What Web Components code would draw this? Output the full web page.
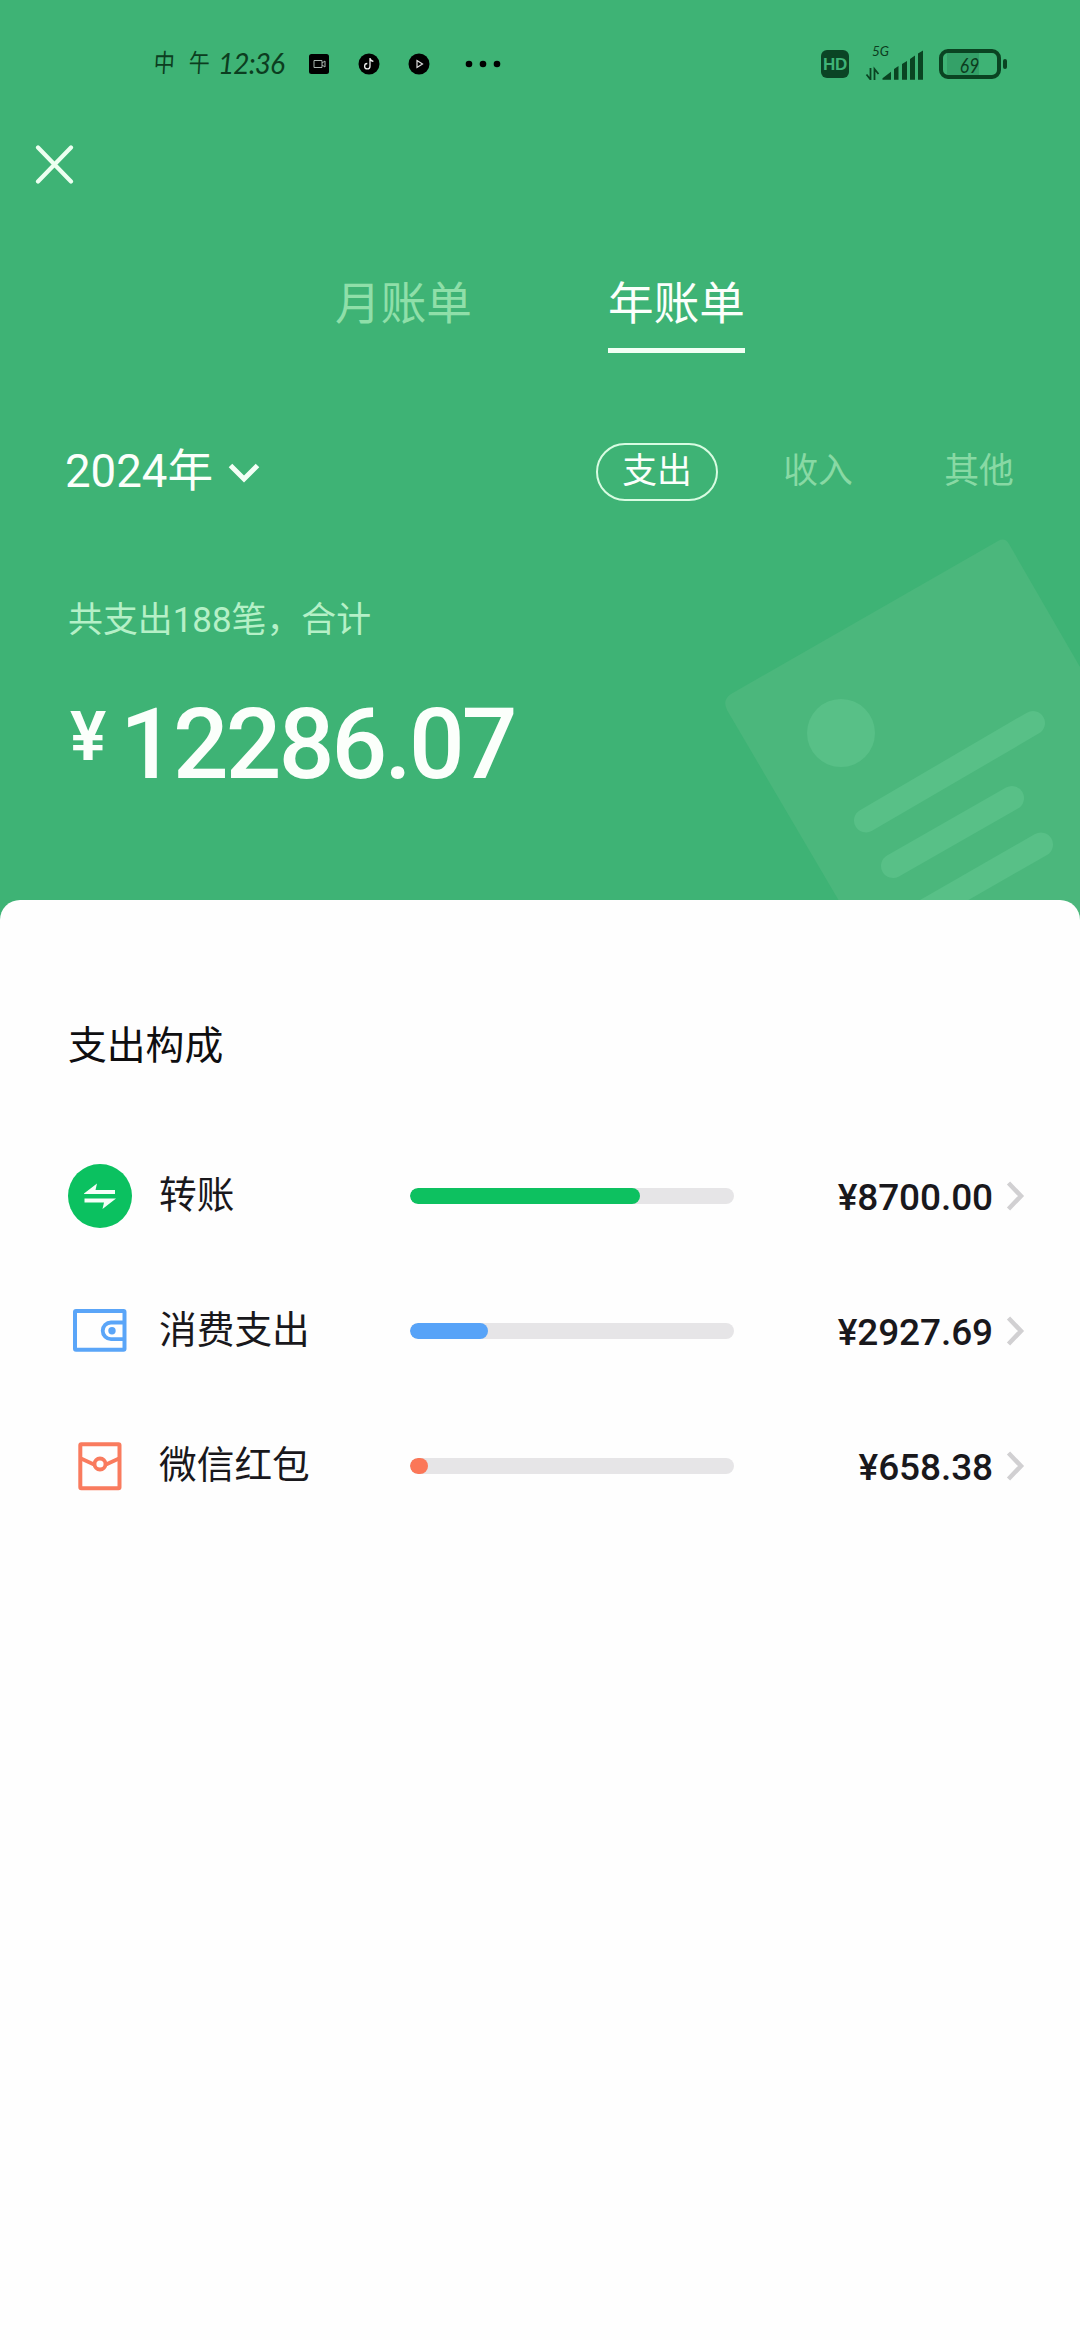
<!DOCTYPE html>
<html lang="zh-CN">
<head>
<meta charset="utf-8">
<title>年账单</title>
<style>
html,body{margin:0;padding:0}
body{width:1080px;height:2340px;overflow:hidden;background:#fefefe;font-family:Roboto,"Noto Sans CJK SC",sans-serif}
</style>
</head>
<body>
<bill-page></bill-page>
<script>
const define = (name, html, setup) => {
  const tpl = document.createElement('template');
  tpl.innerHTML = html;
  customElements.define(name, class extends HTMLElement {
    constructor() {
      super();
      this.attachShadow({mode: 'open'}).appendChild(tpl.content.cloneNode(true));
    }
    connectedCallback() { if (setup) setup(this, this.shadowRoot); }
  });
};

define('status-bar', `
<style>
:host{display:flex;height:128px;align-items:center;justify-content:space-between;padding:0 73px 0 154px;box-sizing:border-box;color:#0c3d20}
.left,.right{display:flex;align-items:center}
.time{display:flex;align-items:center;width:155px;height:34px;margin-top:-3px;font:italic 400 28px/34px Lato,"Noto Sans CJK SC",sans-serif;letter-spacing:-.9px;white-space:pre}
.time b{font:400 21px/32px "Noto Sans CJK SC",sans-serif;letter-spacing:0;width:21px;margin:-3px 14px 0 0;transform:scaleY(1.2) skewX(-4deg)}
.time b+b{margin-right:8px}
svg{display:block}
.right{height:40px}
.hd{width:28px;height:28px;border-radius:6px;background:#0b4425;color:#3fb377;font:700 17px/29px "Liberation Sans",sans-serif;text-align:center;letter-spacing:-.3px}
.net{width:60px;height:38px;margin-left:16px;display:flex;flex-direction:column}
.net span{font:italic 400 13.5px/13px Lato,sans-serif;padding-left:7px}
.bat{display:flex;align-items:center;margin-left:14px}
.cell{width:62px;height:30px;box-sizing:border-box;border:4.5px solid #0a4422;border-radius:9px;display:flex;align-items:center;justify-content:center;font:italic 400 19px/19px Lato,sans-serif;background:linear-gradient(90deg,#3eb375 4px,#34a168 4px,#34a168 36px,#3eb375 36px);background-clip:padding-box}
.cell span{display:block;transform:scale(.92,1.1)}
.tip{width:4px;height:10px;border-radius:2px;background:#0a4422;margin-left:2px}
</style>
<div class="left">
  <div class="time"><b>中</b><b>午</b>12:36</div>
  <svg width="192" height="24" viewBox="309 52 192 24" fill="#000">
    <rect x="309" y="54" width="20" height="20" rx="2.5"/>
    <path d="M314 60.5h8v7h-8zM322 63l3-2v6l-3-2" fill="none" stroke="#a9b5ae" stroke-width="1"/>
    <circle cx="369" cy="64" r="10.5"/>
    <path d="M370 58v8.2a2.700 2.700 0 1 1-2.700-2.700M370 58.500q.6 2.500 3.400 2.800" fill="none" stroke="#eee" stroke-width="1.300"/>
    <circle cx="419" cy="64" r="10.5"/>
    <path d="M417 60.500l5.500 3.500-5.500 3.500z" fill="none" stroke="#ddd" stroke-width="1.200"/>
    <circle cx="469" cy="64" r="3.300"/><circle cx="483" cy="64" r="3.300"/><circle cx="497" cy="64" r="3.300"/>
  </svg>
</div>
<div class="right">
  <div class="hd">HD</div>
  <div class="net"><span>5G</span>
    <svg width="60" height="30" viewBox="864 48 60 30" style="margin-top:-8px;flex:none" fill="#0a4422">
      <path d="M881.500 77.700v-1.500l8.500-6.500v8zM893 77.700V67l4.500-3v13.700zM901 77.700V62l5-3v18.700zM909 77.700V57l5-3.500v24.200zM917 77.700V51.500l5-3v29.200z"/>
      <path d="M869.500 66v11.500l-4-5M873.500 78V67l4 5" fill="none" stroke="#0a4422" stroke-width="1.800"/>
    </svg>
  </div>
  <div class="bat"><div class="cell"><span>69</span></div><div class="tip"></div></div>
</div>`);

define('close-button', `
<style>:host{display:block;padding:17px 0 0 35px;height:56px}svg{display:block}</style>
<svg width="40" height="40" viewBox="0 0 40 40"><path d="M3 2.500L36 36.500M36 2.500L3 36.500" stroke="#ecfff0" stroke-width="4.200" stroke-linecap="round" fill="none"/></svg>`);

define('bill-tab', `
<style>
:host{display:flex;flex-direction:column;align-items:center;width:137px;height:78px;padding-top:3px;box-sizing:border-box;font-size:45.600px;line-height:54px;color:#8fdfa9;white-space:nowrap;border-bottom:5px solid transparent}
:host([active]){color:#fbfffb;border-bottom-color:#f2fff4}
</style><slot></slot>`);

define('type-chip', `
<style>
:host{display:flex;align-items:center;justify-content:center;width:122px;height:58px;padding-bottom:2px;box-sizing:border-box;border:2px solid transparent;border-radius:29px;font-size:34.800px;line-height:50px;color:#88d9a4;white-space:nowrap}
:host([active]){color:#fbfffb;border-color:#d8fce2}
slot{display:block}
</style><slot></slot>`);

define('year-picker', `
<style>
:host{display:flex;align-items:center;gap:15px;font-size:45.600px;line-height:54px;color:#fbfffb;height:58px}
svg{display:block;margin-top:1px}
</style><span><slot></slot></span>
<svg width="32" height="20" viewBox="0 0 32 20"><path d="M2.500 2.500L16 16L29.500 2.500" fill="none" stroke="#f4fff6" stroke-width="5"/></svg>`);

define('receipt-mark', `
<style>:host{display:block;position:absolute;left:700px;top:520px}svg{display:block}</style>
<svg width="380" height="400" viewBox="700 520 380 400">
  <path d="M731 694L998 541Q1005 537 1009 544L1110 719V940H862L727 710Q722 700 731 694Z" fill="#4bb77c"/>
  <circle cx="841" cy="733" r="34" fill="#58c087"/>
  <path d="M866 820.500L1033 723M893 866L1012 798M920 914L1041 844.500" stroke="#58c087" stroke-width="24" stroke-linecap="round"/>
</svg>`);

define('total-amount', `
<style>
:host{display:flex;align-items:flex-start;color:#fbfffb;font-weight:500;line-height:100px;height:100px}
.y{font-size:68px;font-weight:600;line-height:81px;width:50px;padding-top:2px}
.n{font-size:98px;letter-spacing:-2.800px}
</style><span class="y">¥</span><span class="n"><slot></slot></span>`);

define('bill-header', `
<style>
:host{display:block;position:relative;height:920px;background:#3eb375;overflow:hidden}
.tabs{display:flex;justify-content:center;gap:136px;margin-top:74px}
.filters{display:flex;justify-content:space-between;padding:0 40px 0 65px;margin-top:90px}
.chips{display:flex;gap:39px}
.sum{padding-left:68px;margin-top:95px;font-size:34.900px;line-height:50px;color:#b5f0c7}
total-amount{margin:49px 0 0 70px}
</style>
<receipt-mark></receipt-mark>
<status-bar></status-bar>
<close-button></close-button>
<div class="tabs"><bill-tab>月账单</bill-tab><bill-tab active>年账单</bill-tab></div>
<div class="filters"><year-picker>2024年</year-picker>
<div class="chips"><type-chip active>支出</type-chip><type-chip>收入</type-chip><type-chip>其他</type-chip></div></div>
<div class="sum">共支出188笔，合计</div>
<total-amount>12286.07</total-amount>`);

define('category-icon', `
<style>:host{display:block;width:64px;height:64px}svg{display:block}</style><svg width="64" height="64" viewBox="0 0 64 64" fill="none"></svg>`,
(el, root) => {
  root.querySelector('svg').innerHTML = {
    transfer: '<circle cx="32" cy="32" r="32" fill="#0bc160"/><path d="M16 29.500L29 19.500L27.500 26H47V30H16ZM16.500 34.500H48L34.500 45L36 38.500H16.500Z" fill="#f5fff8"/>',
    spend: '<rect x="7" y="12" width="49.500" height="38.800" rx="1" stroke="#5aa5f8" stroke-width="4"/><path d="M56 23.500H43a8.300 8.300 0 0 0 0 16.600H56" stroke="#5aa5f8" stroke-width="3.800"/><circle cx="44" cy="31.800" r="3.700" fill="#5aa5f8"/>',
    packet: '<rect x="12.300" y="10.200" width="39.200" height="44" rx="1" stroke="#f97b5e" stroke-width="4"/><path d="M13 24.500L26 30.500M51 24.500L38 30.500" stroke="#f97b5e" stroke-width="3.800"/><circle cx="32" cy="30" r="5.500" stroke="#f97b5e" stroke-width="3.800"/>'
  }[el.getAttribute('kind')];
});

define('share-bar', `
<style>:host{display:block;width:324px;height:16px;border-radius:8px;background:#e6e5e7;overflow:hidden}div{height:16px;border-radius:8px}</style><div></div>`,
(el, root) => {
  const d = root.querySelector('div');
  d.style.width = el.getAttribute('fill') + 'px';
  d.style.background = el.getAttribute('tone');
});

define('category-row', `
<style>
:host{display:flex;align-items:center;height:135px;padding:0 54px 0 68px;color:#19181c}
.label{width:251px;margin:-2px 0 0 27px;font-size:37.700px;line-height:54px}
.amt{flex:1;text-align:right;font-size:37px;font-weight:500;line-height:44px;margin-top:5px;padding-right:13px;letter-spacing:-.1px}
svg{display:block}
</style>
<slot name="icon"></slot><div class="label"><slot></slot></div><slot name="bar"></slot>
<div class="amt"><slot name="amount"></slot></div>
<svg width="20" height="30" viewBox="0 0 20 30"><path d="M2.500 2L15 15L2.500 28" fill="none" stroke="#d1d0d2" stroke-width="4.500"/></svg>`);

define('bill-card', `
<style>
:host{display:block;position:relative;margin-top:-20px;height:1440px;background:#fefefe;border-radius:20px 20px 0 0;box-sizing:border-box;padding-top:118px}
h2{margin:0 0 55px;padding-left:68px;font-size:38.800px;font-weight:400;line-height:55px;color:#0e0e10}
</style>
<h2>支出构成</h2>
<category-row><category-icon slot="icon" kind="transfer"></category-icon>转账<share-bar slot="bar" fill="230" tone="#0dc160"></share-bar><span slot="amount">¥8700.00</span></category-row>
<category-row><category-icon slot="icon" kind="spend"></category-icon>消费支出<share-bar slot="bar" fill="78" tone="#57a3f8"></share-bar><span slot="amount">¥2927.69</span></category-row>
<category-row><category-icon slot="icon" kind="packet"></category-icon>微信红包<share-bar slot="bar" fill="18" tone="#fb7758"></share-bar><span slot="amount">¥658.38</span></category-row>`);

define('bill-page', `<style>:host{display:block;width:1080px;height:2340px;overflow:hidden}</style><bill-header></bill-header><bill-card></bill-card>`);
</script>
</body>
</html>
